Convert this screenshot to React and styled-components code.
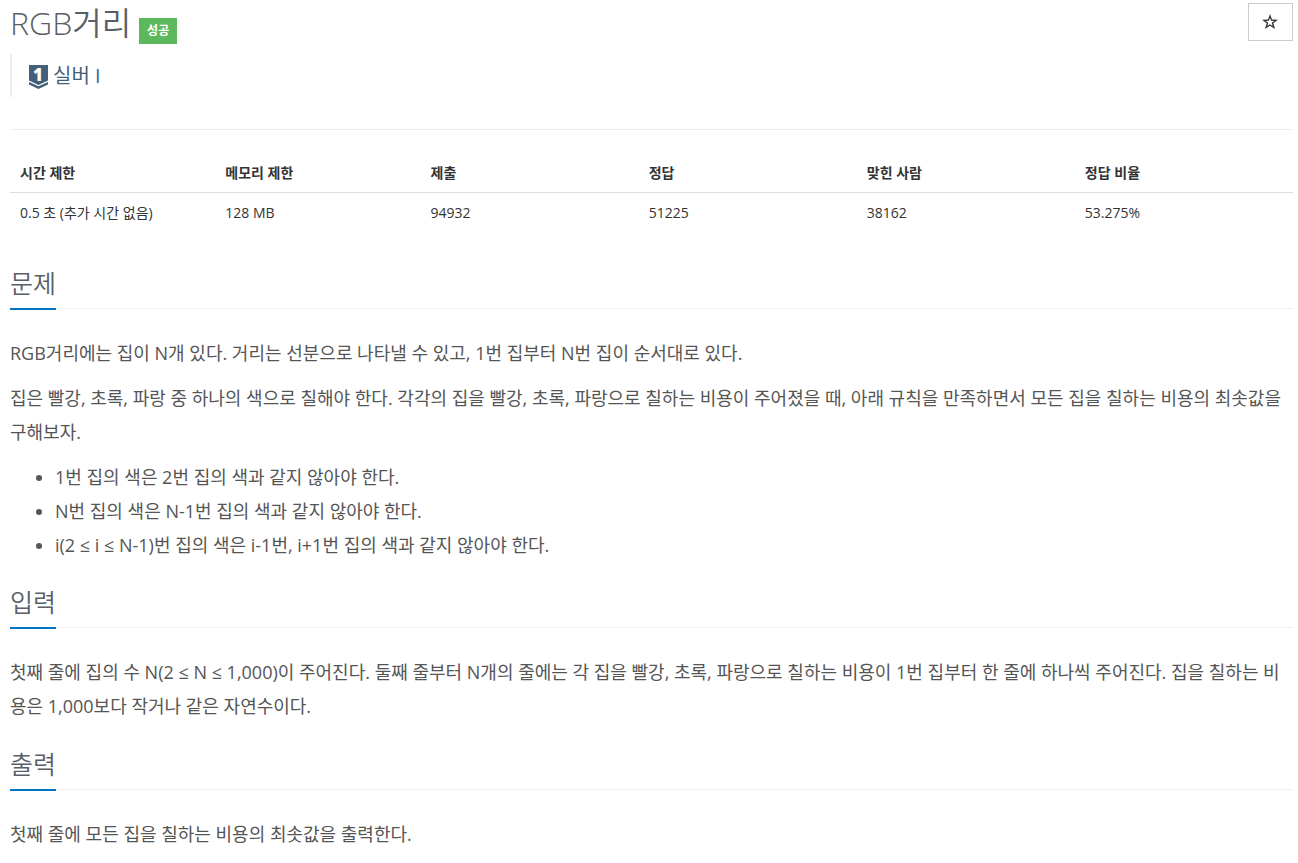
import React from "react";
import styled, { createGlobalStyle } from "styled-components";

const Global = createGlobalStyle`
  *, *::before, *::after { box-sizing: border-box; }
  body {
    margin: 0;
    background: #fff;
    color: #333;
    font: 375 14px/21px "Open Sans", "Noto Sans CJK KR", sans-serif;
  }
`;
const Page = styled.main`padding: 0 5px 0 10px;`;
const Header = styled.header`
  display: flex;
  justify-content: space-between;
  align-items: flex-start;
  padding-top: 3px;
  height: 54px;
`;
const TitleRow = styled.div`
  display: flex;
  align-items: flex-end;
  gap: 8px;
`;
const Title = styled.h1`
  margin: 0;
  font-size: 32px;
  line-height: 40px;
  padding-bottom: 1px;
  font-weight: 350;
  color: #585f69;
`;
const Badge = styled.span`
  background: #5cb85c;
  color: #fff;
  font-size: 12px;
  line-height: 26px;
  font-weight: 700;
  padding: 0 8px;
`;
const StarButton = styled.button`
  display: grid;
  place-items: center;
  width: 45px;
  height: 38px;
  padding: 0 1px 0 0;
  border: 1px solid #ccc;
  background: #fff;
  color: #333;
`;
const Tier = styled.blockquote`
  display: flex;
  align-items: center;
  gap: 5px;
  height: 43px;
  margin: 0 0 32px;
  padding-left: 17px;
  border-left: 2px solid #eee;
  font-size: 20px;
  color: #435f7a;
`;
const TierIcon = styled.svg`
  width: 19px;
  height: 27px;
  overflow: visible;
`;
const Info = styled.table`
  width: 100%;
  border-top: 1px solid #eee;
  border-collapse: separate;
  border-spacing: 0;
  table-layout: fixed;
  padding-top: 23px;
  th, td { text-align: left; padding: 0 10px; height: 40px; }
  td { height: 38px; }
  th { border-bottom: 1px solid #ddd; font-weight: 700; }
`;
const Section = styled.section`padding-top: ${(p) => p.$top}px;`;
const Headline = styled.div`
  display: flex;
  border-bottom: 1px dotted #dfe6ee;
  margin-bottom: 27px;
`;
const Heading = styled.h2`
  margin: 0 0 -2px;
  padding-bottom: 7px;
  border-bottom: 2px solid #0076c0;
  font-size: 25px;
  line-height: 35px;
  font-weight: 350;
  color: #585f69;
`;
const Text = styled.p`
  margin: 0 0 11px;
  font-size: 18px;
  line-height: 34px;
  color: #555;
`;
const List = styled.ul`
  margin: 0;
  padding-left: 45px;
  font-size: 18px;
  line-height: 34px;
  color: #555;
`;

const columns = [
  ["시간 제한", "0.5 초 (추가 시간 없음)", 16],
  ["메모리 제한", "128 MB", 16],
  ["제출", "94932", 17],
  ["정답", "51225", 17],
  ["맞힌 사람", "38162", 17],
  ["정답 비율", "53.275%", 17],
];

export default function App() {
  return (
    <Page>
      <Global />
      <Header>
        <TitleRow><Title>RGB거리</Title><Badge>성공</Badge></TitleRow>
        <StarButton type="button" aria-label="즐겨찾기">
          <svg width="16" height="16" viewBox="0 0 15 15" fill="currentColor" fillRule="evenodd">
            <path d="M7.500 0 9.400 5.200 15 5.300 10.600 8.700 12.200 14 7.500 10.900 2.800 14 4.400 8.700 0 5.300 5.600 5.200zM7.500 3.500 6.500 6.400 3.500 6.500 5.900 8.300 5 11.200 7.500 9.500 10 11.200 9.100 8.300 11.500 6.500 8.500 6.400z" />
          </svg>
        </StarButton>
      </Header>
      <Tier>
        <TierIcon viewBox="0 0 19 27" fill="#435f7a">
          <path d="M0 3h19v15.500l-9.500 4.500L0 18.500z" />
          <path d="M0 20l9.500 4.300L19 20v2.500L9.500 27 0 22.500z" />
          <text x="9" y="19" textAnchor="middle" fontSize="17" fontWeight="800" fill="#fff">1</text>
        </TierIcon>
        실버 I
      </Tier>
      <Info>
        <colgroup>{columns.map(([h, , w]) => <col key={h} width={`${w}%`} />)}</colgroup>
        <thead><tr>{columns.map(([h]) => <th key={h} scope="col">{h}</th>)}</tr></thead>
        <tbody><tr>{columns.map(([h, v]) => <td key={h}>{v}</td>)}</tr></tbody>
      </Info>
      <Section $top={35}>
        <Headline><Heading>문제</Heading></Headline>
        <Text>RGB거리에는 집이 N개 있다. 거리는 선분으로 나타낼 수 있고, 1번 집부터 N번 집이 순서대로 있다.</Text>
        <Text>집은 빨강, 초록, 파랑 중 하나의 색으로 칠해야 한다. 각각의 집을 빨강, 초록, 파랑으로 칠하는 비용이 주어졌을 때, 아래 규칙을 만족하면서 모든 집을 칠하는 비용의 최솟값을 구해보자.</Text>
        <List>
          <li>1번 집의 색은 2번 집의 색과 같지 않아야 한다.</li>
          <li>N번 집의 색은 N-1번 집의 색과 같지 않아야 한다.</li>
          <li>i(2 ≤ i ≤ N-1)번 집의 색은 i-1번, i+1번 집의 색과 같지 않아야 한다.</li>
        </List>
      </Section>
      <Section $top={23}>
        <Headline><Heading>입력</Heading></Headline>
        <Text>첫째 줄에 집의 수 N(2 ≤ N ≤ 1,000)이 주어진다. 둘째 줄부터 N개의 줄에는 각 집을 빨강, 초록, 파랑으로 칠하는 비용이 1번 집부터 한 줄에 하나씩 주어진다. 집을 칠하는 비용은 1,000보다 작거나 같은 자연수이다.</Text>
      </Section>
      <Section $top={13}>
        <Headline><Heading>출력</Heading></Headline>
        <Text>첫째 줄에 모든 집을 칠하는 비용의 최솟값을 출력한다.</Text>
      </Section>
    </Page>
  );
}
